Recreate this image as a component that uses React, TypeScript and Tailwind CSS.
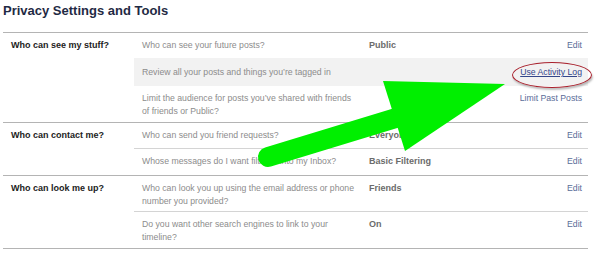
const font = "font-['Liberation_Sans',Arial,sans-serif]"

type Row = {
  q: string
  value?: string
  action: string
  h: string
  shaded?: boolean
  link?: boolean
}

type Section = { label: string; rows: Row[]; divided: boolean }

const SECTIONS: Section[] = [
  {
    label: "Who can see my stuff?",
    divided: false,
    rows: [
      { q: "Who can see your future posts?", value: "Public", action: "Edit", h: "h-[25px]" },
      {
        q: "Review all your posts and things you\u2019re tagged in",
        action: "Use Activity Log",
        h: "h-[28px]",
        shaded: true,
        link: true,
      },
      {
        q: "Limit the audience for posts you\u2019ve shared with friends of friends or Public?",
        action: "Limit Past Posts",
        h: "h-[36px]",
      },
    ],
  },
  {
    label: "Who can contact me?",
    divided: true,
    rows: [
      { q: "Who can send you friend requests?", value: "Everyone", action: "Edit", h: "h-[26px]" },
      {
        q: "Whose messages do I want filtered into my Inbox?",
        value: "Basic Filtering",
        action: "Edit",
        h: "h-[26px]",
      },
    ],
  },
  {
    label: "Who can look me up?",
    divided: true,
    rows: [
      {
        q: "Who can look you up using the email address or phone number you provided?",
        value: "Friends",
        action: "Edit",
        h: "h-[36px]",
      },
      {
        q: "Do you want other search engines to link to your timeline?",
        value: "On",
        action: "Edit",
        h: "h-[36px]",
      },
    ],
  },
]

function SettingRow({ row }: { row: Row }) {
  return (
    <div
      className={`flex items-start ${row.h} ${row.shaded ? "bg-[#f2f2f2] pt-[8px]" : "pt-[6px]"} pl-[8px] pr-[6px] text-[8.7px] leading-[13px]`}
    >
      <p className="w-[227px] pr-[10px] text-[#8c8c8c]">{row.q}</p>
      <p className="flex-1 text-[9px] font-bold text-[#6b6b6b]">{row.value}</p>
      <p className={row.link ? "text-[#34468a] underline" : "text-[#5a6c98]"}>{row.action}</p>
    </div>
  )
}

export default function App() {
  return (
    <div className={`relative h-[255px] w-[598px] overflow-hidden bg-white ${font}`}>
      <div className="ml-[3px] w-[585px]">
        <h1 className="h-[32px] pt-[3px] text-[13px] font-bold leading-[16px] text-[#1f2a44]">
          Privacy Settings and Tools
        </h1>
        <div className="border-t border-[#b4b4b4]">
          {SECTIONS.map((s) => (
            <div key={s.label} className="flex border-b border-[#b4b4b4]">
              <p className="w-[131px] pl-[8px] pt-[6px] text-[9px] font-bold leading-[13px] text-[#222]">
                {s.label}
              </p>
              <div className={`flex-1 ${s.divided ? "divide-y divide-[#d4d4d4]" : ""}`}>
                {s.rows.map((r) => (
                  <SettingRow key={r.q} row={r} />
                ))}
              </div>
            </div>
          ))}
        </div>
      </div>

      {/* red ring around the activity log link */}
      <div className="absolute left-[512px] top-[62px] h-[26px] w-[80px] rounded-[50%] border-[1.5px] border-[#a8202c] shadow-[1px_2px_2px_rgba(0,0,0,0.25)]" />

      {/* green pointer */}
      <svg className="pointer-events-none absolute left-0 top-0" width="598" height="255" viewBox="0 0 598 255">
        <line x1="268" y1="157" x2="396" y2="118" stroke="#00ef00" strokeWidth="20" strokeLinecap="round" />
        <polygon points="383,81 505,84 405,151" fill="#00ef00" />
      </svg>
    </div>
  )
}
